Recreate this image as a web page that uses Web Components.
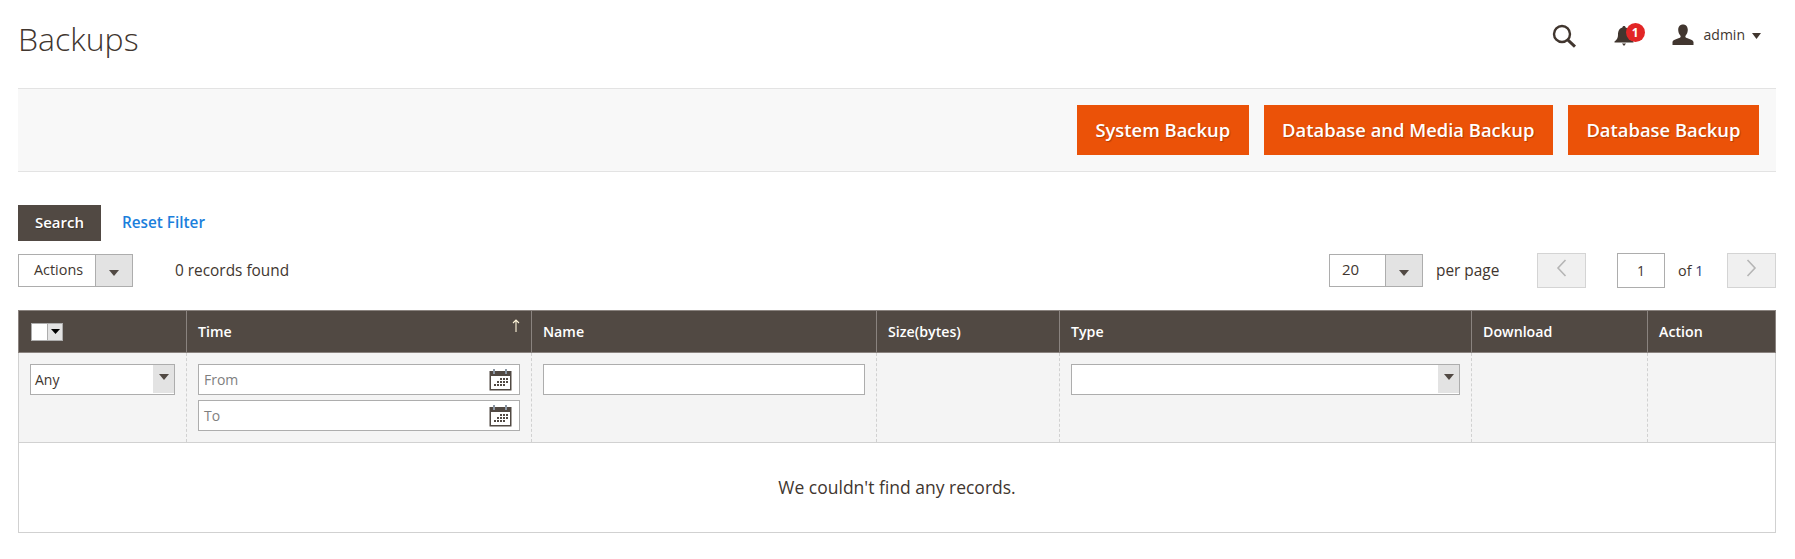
<!DOCTYPE html>
<html lang="en">
<head>
<meta charset="utf-8">
<title>Backups</title>
<style>
  html, body { margin: 0; padding: 0; background: #fff; }
  body { font-family: "Open Sans", "Liberation Sans", sans-serif; font-size: 14px; color: #41362f; }
  main { padding: 0 19px 0 18px; }
</style>
</head>
<body>
<main>
  <page-header title-text="Backups"></page-header>
  <page-actions>
    <action-button>System Backup</action-button>
    <action-button>Database and Media Backup</action-button>
    <action-button>Database Backup</action-button>
  </page-actions>
  <grid-filters></grid-filters>
  <grid-toolbar></grid-toolbar>
  <backup-grid></backup-grid>
</main>

<script>
// shared little triangle for the select toggles
const arrow = (color, w = 12, h = 7) =>
  `<svg width="${w}" height="${h}" viewBox="0 0 12 7" preserveAspectRatio="none"><path d="M0 0h12L6 7z" fill="${color}"/></svg>`

const calendar = `
  <svg class="cal" width="23" height="23" viewBox="0 0 23 23">
    <rect x="0.5" y="3" width="22" height="19.5" fill="#514943"/>
    <rect x="2" y="8" width="19" height="13" fill="#fff"/>
    <path d="M5 1v5M17 1v5" stroke="#8b96a3" stroke-width="2" fill="none"/>
    <g fill="#514943">
      <rect x="11" y="10" width="2" height="2"/><rect x="14" y="10" width="2" height="2"/><rect x="17" y="10" width="2" height="2"/>
      <rect x="8" y="13" width="2" height="2"/><rect x="11" y="13" width="2" height="2"/><rect x="14" y="13" width="2" height="2"/><rect x="17" y="13" width="2" height="2"/>
      <rect x="5" y="16" width="2" height="2"/><rect x="8" y="16" width="2" height="2"/><rect x="11" y="16" width="2" height="2"/><rect x="14" y="16" width="2" height="2"/>
    </g>
  </svg>`

class PageHeader extends HTMLElement {
  constructor () {
    super()
    this.shadow = this.attachShadow({ mode: 'open' })
  }

  connectedCallback () {
    this.shadow.innerHTML = `
      <style>
        :host { display: flex; align-items: center; justify-content: space-between; height: 88px; box-sizing: border-box; padding-bottom: 12px; }
        h1 { margin: 0; font: 300 32px "Open Sans", sans-serif; color: #41362f; }
        .tools { display: flex; align-items: center; padding-right: 15px; margin-top: -4px; }
        .search { display: block; margin-right: 38px; }
        .bell { position: relative; width: 20px; height: 22px; margin-right: 38px; }
        .bell svg { display: block; }
        .badge { position: absolute; left: 12px; top: -2px; width: 19px; height: 19px; border-radius: 50%; background: #e22626; color: #fff; font: 700 12px/19px "Open Sans", sans-serif; text-align: center; }
        .user { display: block; margin-right: 10px; margin-top: -2px; }
        .name { font-size: 14px; color: #41362f; margin-right: 7px; margin-top: -3px; }
      </style>
      <h1>${this.getAttribute('title-text')}</h1>
      <div class="tools">
        <svg class="search" width="24" height="24" viewBox="0 0 24 24" fill="none" stroke="#41362f">
          <circle cx="10" cy="10" r="8" stroke-width="2.4"/>
          <path d="M15.8 15.8L23 22.6" stroke-width="3"/>
        </svg>
        <div class="bell">
          <svg width="20" height="22" viewBox="0 0 20 22" fill="#41362f">
            <path d="M10 1c1 0 1.6.7 1.6 1.6C15 3.5 16 6.500 16 10c0 3 1.200 5 3.500 6.500v1H.5v-1C2.800 15 4 13 4 10c0-3.500 1-6.500 4.400-7.400C8.400 1.700 9 1 10 1zM8 18.500h4L10 21z"/>
          </svg>
          <span class="badge">1</span>
        </div>
        <svg class="user" width="22" height="22" viewBox="0 0 22 22" fill="#41362f">
          <path d="M11 .5c3 0 4.800 2.200 4.800 5.300 0 2.200-.8 4.300-2.100 5.600-.5.500-.5 1.700.2 2.200 1.500 1 7 2 7.600 4.400V21H.5v-3c.6-2.400 6.100-3.400 7.600-4.400.7-.5.7-1.700.2-2.200C7 10.100 6.200 8 6.200 5.800 6.200 2.700 8 .5 11 .5z"/>
        </svg>
        <span class="name">admin</span>
        ${arrow('#41362f', 9, 6)}
      </div>
    `
  }
}

class PageActions extends HTMLElement {
  constructor () {
    super()
    const shadow = this.attachShadow({ mode: 'open' })
    shadow.innerHTML = `
      <style>
        :host { display: flex; justify-content: flex-end; gap: 15px; box-sizing: border-box; height: 84px; padding: 16px 17px 0 0; background: #f8f8f8; border-top: 1px solid #e3e3e3; border-bottom: 1px solid #e3e3e3; }
      </style>
      <slot></slot>
    `
  }
}

class ActionButton extends HTMLElement {
  constructor () {
    super()
    const shadow = this.attachShadow({ mode: 'open' })
    shadow.innerHTML = `
      <style>
        :host { display: block; box-sizing: border-box; height: 50px; padding: 0 18.5px; background: #eb5208; color: #fff; font: 600 18.4px/50px "Open Sans", sans-serif; text-shadow: 1px 1px 1px rgba(0,0,0,.25); white-space: nowrap; }
      </style>
      <slot></slot>
    `
  }
}

class GridFilters extends HTMLElement {
  constructor () {
    super()
    const shadow = this.attachShadow({ mode: 'open' })
    shadow.innerHTML = `
      <style>
        :host { display: flex; align-items: center; gap: 21px; margin-top: 33px; height: 36px; }
        .search { box-sizing: border-box; width: 83px; height: 36px; background: #514943; color: #fff; font: 600 15px/34px "Open Sans", sans-serif; text-align: center; text-shadow: 1px 1px 1px rgba(0,0,0,.3); }
        .reset { color: #1b7fdc; font: 600 15.3px "Open Sans", sans-serif; margin-top: -2px; }
      </style>
      <div class="search">Search</div>
      <span class="reset">Reset Filter</span>
    `
  }
}

class SelectBox extends HTMLElement {
  constructor () {
    super()
    const shadow = this.attachShadow({ mode: 'open' })
    shadow.innerHTML = `
      <style>
        :host { display: inline-flex; box-sizing: border-box; height: 33px; border: 1px solid #adadad; background: #fff; color: #41362f; font: 14.4px "Open Sans", sans-serif; }
        .label { flex: 1; padding-left: var(--pad, 12px); line-height: 29px; }
        .toggle { display: flex; align-items: center; justify-content: center; width: 37px; background: #e3e3e3; border-left: 1px solid #adadad; padding-top: 4px; box-sizing: border-box; }
      </style>
      <span class="label"><slot></slot></span>
      <span class="toggle">${arrow('#514943', 10, 6)}</span>
    `
  }
}

class GridToolbar extends HTMLElement {
  constructor () {
    super()
    const shadow = this.attachShadow({ mode: 'open' })
    shadow.innerHTML = `
      <style>
        :host { display: flex; align-items: center; margin-top: 12px; height: 35px; color: #41362f; font: 15.4px "Open Sans", sans-serif; }
        .actions { width: 115px; --pad: 15px; }
        .count { margin-left: 42px; }
        .pager { display: flex; align-items: center; margin-left: auto; }
        .limit { width: 94px; font-size: 15px; }
        .per { margin-left: 13px; width: 62px; white-space: nowrap; }
        .nav { display: flex; align-items: center; justify-content: center; box-sizing: border-box; width: 49px; height: 35px; background: #f0f0f0; border: 1px solid #d4d4d4; padding-bottom: 5px; }
        .prev { margin-left: 39px; }
        .page { box-sizing: border-box; width: 48px; height: 35px; margin-left: 31px; border: 1px solid #adadad; text-align: center; line-height: 33px; font-size: 14px; }
        .of { margin-left: 13px; width: 49px; font-size: 14.4px; }
        .of b { font-weight: 400; color: #303d73; }
      </style>
      <select-box class="actions">Actions</select-box>
      <span class="count">0 records found</span>
      <div class="pager">
        <select-box class="limit">20</select-box>
        <span class="per">per page</span>
        <div class="nav prev"><svg width="11" height="18" viewBox="0 0 11 18"><path d="M9.500 1L2 9l7.500 8" fill="none" stroke="#b5b5b5" stroke-width="1.600"/></svg></div>
        <div class="page">1</div>
        <span class="of">of <b>1</b></span>
        <div class="nav"><svg width="11" height="18" viewBox="0 0 11 18"><path d="M1.500 1L9 9l-7.500 8" fill="none" stroke="#b5b5b5" stroke-width="1.600"/></svg></div>
      </div>
    `
  }
}

class BackupGrid extends HTMLElement {
  constructor () {
    super()
    const shadow = this.attachShadow({ mode: 'open' })
    shadow.innerHTML = `
      <style>
        :host { display: block; margin-top: 22px; width: 1757px; font: 14px "Open Sans", sans-serif; color: #41362f; }
        table { width: 100%; table-layout: fixed; border-collapse: collapse; }
        th { box-sizing: border-box; height: 42px; padding: 0 11px; background: #514943; border: 1px solid #8a837f; color: #fff; font-weight: 600; font-size: 14.2px; text-align: left; position: relative; }
        th.time .sort { position: absolute; right: 11px; top: 8px; }
        .check { display: flex; box-sizing: border-box; width: 32px; height: 18px; margin-left: 1px; border: 1px solid #adadad; }
        .check i { display: block; width: 15px; background: #fff; }
        .check span { display: flex; align-items: center; justify-content: center; flex: 1; background: #e3e3e3; border-left: 1px solid #adadad; }
        .filters td { box-sizing: border-box; height: 90px; padding: 11px 11px 0 11px; vertical-align: top; background: #f4f4f4; border-left: 1px dashed #d1d1d1; border-right: 1px dashed #d1d1d1; border-bottom: 1px solid #d1d1d1; }
        .filters td:first-child { border-left: 1px solid #d1d1d1; }
        .filters td:last-child { border-right: 1px solid #d1d1d1; }
        .field { display: flex; align-items: center; justify-content: space-between; box-sizing: border-box; height: 31px; padding: 0 7px 0 5px; background: #fff; border: 1px solid #adadad; color: #7f7f7f; }
        .field + .field { margin-top: 5px; }
        .field.sel { padding: 0; color: #41362f; }
        .field.sel .tg { display: flex; align-items: center; justify-content: center; align-self: stretch; width: 21px; margin-bottom: 1px; background: #e3e3e3; padding-bottom: 5px; box-sizing: border-box; }
        .field.sel .v { padding-left: 4px; }
        .cal { display: block; }
        .empty td { box-sizing: border-box; height: 90px; padding: 0 0 2px; text-align: center; font-size: 17.5px; background: #fff; border: 1px solid #d1d1d1; }
      </style>
      <table>
        <colgroup>
          <col style="width:168px"><col style="width:345px"><col style="width:345px"><col style="width:183px"><col style="width:412px"><col style="width:176px"><col style="width:128px">
        </colgroup>
        <thead>
          <tr>
            <th><div class="check"><i></i><span>${arrow('#000', 9, 5)}</span></div></th>
            <th class="time">Time<svg class="sort" width="8" height="13" viewBox="0 0 8 13"><path d="M4 13V1M1 4l3-3 3 3" fill="none" stroke="#fff5d9" stroke-width="1.100"/></svg></th>
            <th>Name</th><th>Size(bytes)</th><th>Type</th><th>Download</th><th>Action</th>
          </tr>
          <tr class="filters">
            <td><div class="field sel"><span class="v">Any</span><span class="tg">${arrow('#514943', 10, 6)}</span></div></td>
            <td>
              <div class="field"><span>From</span>${calendar}</div>
              <div class="field"><span>To</span>${calendar}</div>
            </td>
            <td><div class="field"></div></td>
            <td></td>
            <td><div class="field sel"><span></span><span class="tg">${arrow('#514943', 10, 6)}</span></div></td>
            <td></td>
            <td></td>
          </tr>
        </thead>
        <tbody>
          <tr class="empty"><td colspan="7">We couldn't find any records.</td></tr>
        </tbody>
      </table>
    `
  }
}

customElements.define('page-header', PageHeader)
customElements.define('page-actions', PageActions)
customElements.define('action-button', ActionButton)
customElements.define('grid-filters', GridFilters)
customElements.define('select-box', SelectBox)
customElements.define('grid-toolbar', GridToolbar)
customElements.define('backup-grid', BackupGrid)
</script>
</body>
</html>
